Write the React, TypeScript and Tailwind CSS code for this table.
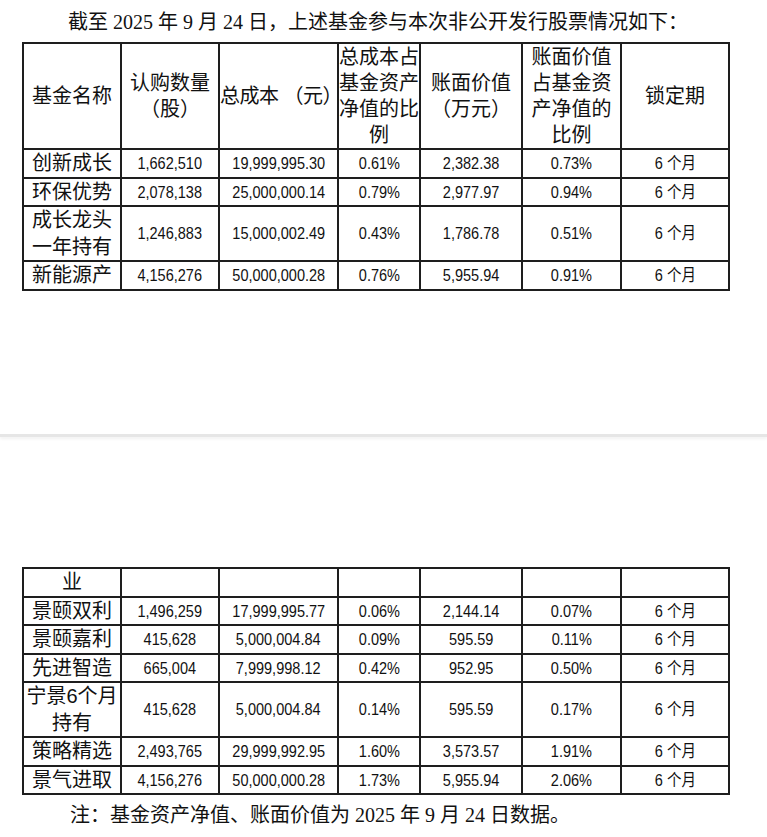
import React from 'react';

const cjk = '"Liberation Sans", "Noto Sans CJK SC", sans-serif';
const serif = '"Liberation Serif", "Noto Sans CJK SC", serif';

type Row = { name: React.ReactNode; cells: string[] };

const page1: Row[] = [
  { name: '创新成长', cells: ['1,662,510', '19,999,995.30', '0.61%', '2,382.38', '0.73%', '6 个月'] },
  { name: '环保优势', cells: ['2,078,138', '25,000,000.14', '0.79%', '2,977.97', '0.94%', '6 个月'] },
  {
    name: (
      <>
        成长龙头
        <br />
        一年持有
      </>
    ),
    cells: ['1,246,883', '15,000,002.49', '0.43%', '1,786.78', '0.51%', '6 个月'],
  },
  { name: '新能源产', cells: ['4,156,276', '50,000,000.28', '0.76%', '5,955.94', '0.91%', '6 个月'] },
];

const page2: Row[] = [
  { name: '业', cells: ['', '', '', '', '', ''] },
  { name: '景颐双利', cells: ['1,496,259', '17,999,995.77', '0.06%', '2,144.14', '0.07%', '6 个月'] },
  { name: '景颐嘉利', cells: ['415,628', '5,000,004.84', '0.09%', '595.59', '0.11%', '6 个月'] },
  { name: '先进智造', cells: ['665,004', '7,999,998.12', '0.42%', '952.95', '0.50%', '6 个月'] },
  {
    name: (
      <>
        宁景6个月
        <br />
        持有
      </>
    ),
    cells: ['415,628', '5,000,004.84', '0.14%', '595.59', '0.17%', '6 个月'],
  },
  { name: '策略精选', cells: ['2,493,765', '29,999,992.95', '1.60%', '3,573.57', '1.91%', '6 个月'] },
  { name: '景气进取', cells: ['4,156,276', '50,000,000.28', '1.73%', '5,955.94', '2.06%', '6 个月'] },
];

const td = 'border-2 border-[#1e1e1e] p-0 text-center align-middle';

function Cols() {
  return (
    <colgroup>
      <col className="w-[98px]" />
      <col className="w-[98px]" />
      <col className="w-[119px]" />
      <col className="w-[82px]" />
      <col className="w-[102px]" />
      <col className="w-[99px]" />
      <col className="w-[108px]" />
    </colgroup>
  );
}

function Body({ rows }: { rows: Row[] }) {
  return (
    <tbody>
      {rows.map((r, i) => (
        <tr key={i}>
          <td className={`${td} text-[20px] leading-[26.5px]`}>{r.name}</td>
          {r.cells.map((c, j) => (
            <td key={j} className={`${td} whitespace-nowrap text-[16.5px] leading-[26.5px]`}>
              <span className="inline-block scale-x-[0.88]">{c}</span>
            </td>
          ))}
        </tr>
      ))}
    </tbody>
  );
}

export default function App() {
  return (
    <div className="min-h-[837px] bg-white text-[#111]" style={{ fontFamily: cjk }}>
      {/* page 1 */}
      <div className="h-[434px] pl-[22px] pt-[9px]">
        <p className="pl-[46px] text-[20px] leading-[26px]" style={{ fontFamily: serif }}>
          截至 2025 年 9 月 24 日，上述基金参与本次非公开发行股票情况如下：
        </p>
        <table className="mt-[7px] w-[706px] table-fixed border-collapse">
          <Cols />
          <thead>
            <tr className="text-[20px] leading-[26px]">
              <th className={`${td} font-normal`}>基金名称</th>
              <th className={`${td} font-normal`}>
                认购数量
                <br />
                （股）
              </th>
              <th className={`${td} whitespace-nowrap text-left font-normal tracking-[-0.5px]`}>总成本 （元）</th>
              <th className={`${td} font-normal`}>
                总成本占
                <br />
                基金资产
                <br />
                净值的比
                <br />
                例
              </th>
              <th className={`${td} font-normal`}>
                账面价值
                <br />
                （万元）
              </th>
              <th className={`${td} font-normal`}>
                账面价值
                <br />
                占基金资
                <br />
                产净值的
                <br />
                比例
              </th>
              <th className={`${td} font-normal`}>锁定期</th>
            </tr>
          </thead>
          <Body rows={page1} />
        </table>
      </div>

      {/* page break */}
      <div className="h-[3px] bg-[#e6e6e6] shadow-[0_2px_3px_rgba(0,0,0,0.06)]" />

      {/* page 2 */}
      <div className="pl-[22px] pt-[130px]">
        <table className="w-[706px] table-fixed border-collapse">
          <Cols />
          <Body rows={page2} />
        </table>
        <p className="mt-[7px] pl-[48px] text-[20px] leading-[26px]" style={{ fontFamily: serif }}>
          注：基金资产净值、账面价值为 2025 年 9 月 24 日数据。
        </p>
      </div>
    </div>
  );
}
